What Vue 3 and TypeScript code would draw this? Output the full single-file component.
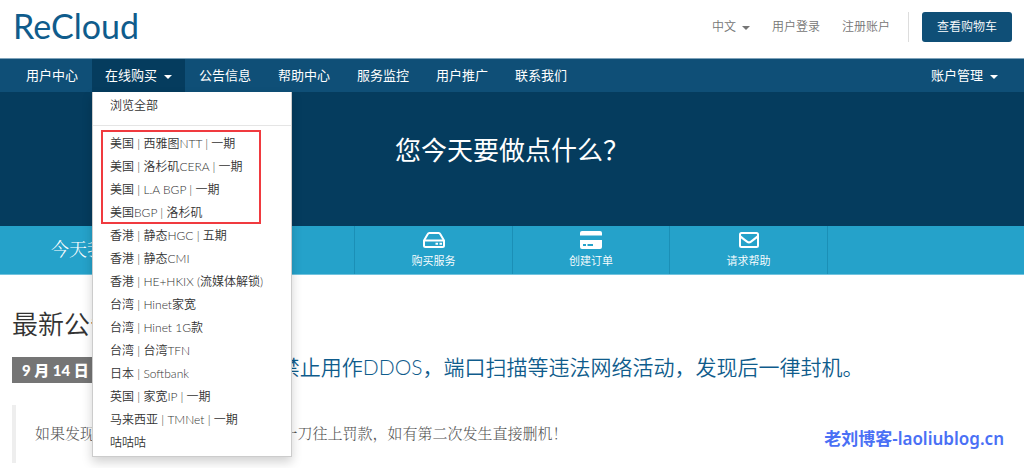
<script setup lang="ts">
interface NavItem {
  label: string
  caret?: boolean
  active?: boolean
}

const navItems: NavItem[] = [
  { label: '用户中心' },
  { label: '在线购买', caret: true, active: true },
  { label: '公告信息' },
  { label: '帮助中心' },
  { label: '服务监控' },
  { label: '用户推广' },
  { label: '联系我们' },
]

const featured: string[] = [
  '美国 | 西雅图NTT | 一期',
  '美国 | 洛杉矶CERA | 一期',
  '美国 | L.A BGP | 一期',
  '美国BGP | 洛杉矶',
]

const products: string[] = [
  '香港 | 静态HGC | 五期',
  '香港 | 静态CMI',
  '香港 | HE+HKIX (流媒体解锁)',
  '台湾 | Hinet家宽',
  '台湾 | Hinet 1G款',
  '台湾 | 台湾TFN',
  '日本 | Softbank',
  '英国 | 家宽IP | 一期',
  '马来西亚 | TMNet | 一期',
  '咕咕咕',
]
</script>

<template>
  <div class="page">
    <header class="header">
      <a class="logo" href="#">ReCloud</a>
      <ul class="top-links">
        <li><button type="button" class="lang">中文<span class="caret"></span></button></li>
        <li><a href="#">用户登录</a></li>
        <li><a href="#">注册账户</a></li>
        <li class="cart-cell"><a class="cart" href="#">查看购物车</a></li>
      </ul>
    </header>

    <nav class="nav">
      <ul class="nav-list">
        <li v-for="item in navItems" :key="item.label" class="nav-item" :class="{ active: item.active }">
          <a href="#">{{ item.label }}<span v-if="item.caret" class="caret"></span></a>
          <div v-if="item.active" class="menu">
            <a class="menu-link" href="#">浏览全部</a>
            <hr class="menu-rule" />
            <div class="featured">
              <a v-for="name in featured" :key="name" class="menu-link" href="#">{{ name }}</a>
            </div>
            <a v-for="name in products" :key="name" class="menu-link" href="#">{{ name }}</a>
          </div>
        </li>
      </ul>
      <div class="nav-item">
        <a href="#">账户管理<span class="caret"></span></a>
      </div>
    </nav>

    <section class="hero">
      <h2>您今天要做点什么？</h2>
    </section>

    <section class="shortcuts">
      <p class="prompt">今天我们能帮您什么</p>
      <a class="shortcut" href="#">
        <svg width="24" height="18" viewBox="0 0 24 18" fill="none" stroke="#fff" stroke-width="2" stroke-linejoin="round" aria-hidden="true">
          <path d="M2 9.500 L5.800 3 Q6.300 2 7.300 2 H16.700 Q17.700 2 18.200 3 L22 9.500 V14.500 Q22 16 20.500 16 H3.500 Q2 16 2 14.500 Z" />
          <path d="M2 9.500 H22" />
          <path d="M13.500 12.800 H16 M17.500 12.800 H20" stroke-linejoin="miter" />
        </svg>
        <span>购买服务</span>
      </a>
      <a class="shortcut" href="#">
        <svg width="24" height="18" viewBox="0 0 24 18" aria-hidden="true">
          <path fill="#fff" d="M3 0 H21 Q23 0 23 2 V4.500 H1 V2 Q1 0 3 0 Z" />
          <path fill="#fff" fill-rule="evenodd" d="M1 9 H23 V16 Q23 18 21 18 H3 Q1 18 1 16 Z M4 13 V15 H7 V13 Z M8.500 13 V15 H14 V13 Z" />
        </svg>
        <span>创建订单</span>
      </a>
      <a class="shortcut" href="#">
        <svg width="22" height="18" viewBox="0 0 22 18" fill="none" stroke="#fff" stroke-width="2" stroke-linejoin="round" aria-hidden="true">
          <rect x="2" y="2" width="18" height="14" rx="1.500" />
          <path d="M2 5 Q4 7 9 10.600 Q11 12.200 13 10.600 Q18 7 20 5" />
        </svg>
        <span>请求帮助</span>
      </a>
      <div class="shortcut-end"></div>
    </section>

    <main class="news">
      <h2>最新公告</h2>
      <article>
        <div class="headline">
          <time>9 月 14 日</time>
          <a href="#">本站的所有服务器禁止用作DDOS，端口扫描等违法网络活动，发现后一律封机。</a>
        </div>
        <blockquote>
          <p>如果发现 违规行为， 立即封停并处以一刀往上罚款，如有第二次发生直接删机！</p>
        </blockquote>
      </article>
    </main>

    <div class="watermark">老刘博客-laoliublog.cn</div>
  </div>
</template>

<style>
body {
  background: #fff;
  overflow: hidden;
}
</style>

<style scoped>
.page {
  position: relative;
  min-height: 100vh;
  font-family: Lato, "Noto Sans CJK SC", sans-serif;
  font-size: 12px;
  color: #444;
}

a {
  color: inherit;
  text-decoration: none;
}

ul,
h2,
p,
blockquote {
  margin: 0;
  padding: 0;
  font-weight: 400;
  list-style: none;
}

.caret {
  display: inline-block;
  margin-left: 6px;
  vertical-align: middle;
  border: 4px solid transparent;
  border-top-color: currentColor;
  border-bottom: 0;
}

.header {
  display: flex;
  justify-content: space-between;
  align-items: flex-start;
  padding: 0 12px 0 13px;
  height: 58px;
  border-bottom: 1px solid #7fa3ba;
}

.logo {
  color: #0f5c8c;
  font-size: 34px;
  font-weight: 400;
  line-height: 52px;
}

.top-links {
  display: flex;
  align-items: center;
  gap: 22px;
  padding-top: 12px;
  color: #757575;
  font-weight: 350;
}

.top-links li:not(.cart-cell) {
  padding-bottom: 4px;
}

.lang {
  padding: 0;
  border: 0;
  background: none;
  font: inherit;
  color: inherit;
}

.cart-cell {
  margin-left: -4px;
  padding-left: 13px;
  border-left: 1px solid #ddd;
}

.cart {
  display: block;
  padding: 0 15px;
  line-height: 30px;
  border-radius: 3px;
  background: #0f4f77;
  color: #fff;
}

.nav {
  display: flex;
  justify-content: space-between;
  padding: 0 13px;
  background: #0f4f77;
  color: #fff;
  font-size: 13px;
  line-height: 33px;
}

.nav-list {
  display: flex;
  gap: 1px;
}

.nav-item {
  position: relative;
}

.nav-item > a {
  display: block;
  padding: 0 13px;
}

.nav-item .caret {
  margin-left: 7px;
}

.active {
  background: #053c5e;
}

.menu {
  position: absolute;
  z-index: 2;
  top: 100%;
  left: 0;
  width: 198px;
  padding: 2px 0;
  border: 1px solid #ccc;
  border-top: 0;
  background: #fff;
  box-shadow: 0 5px 10px rgba(0, 0, 0, 0.18);
  color: #333;
  font-size: 12px;
  font-weight: 350;
  line-height: 23px;
}

.menu-link {
  display: block;
  padding: 0 17px;
  white-space: nowrap;
}

.menu-rule {
  margin: 8px 0 6px;
  border: 0;
  border-top: 1px solid #e5e5e5;
}

.featured {
  position: relative;
}

.featured::before {
  content: "";
  position: absolute;
  inset: -2px 30px 0 8px;
  border: 2px solid #f03a3f;
}

.hero {
  padding: 38px 12px 56px;
  background: #053c5e;
  color: #fff;
  text-align: center;
}

.hero h2 {
  font-size: 26px;
  line-height: 40px;
}

.shortcuts {
  display: grid;
  grid-template-columns: 343fr 158fr 157fr 158fr 184fr;
  padding: 0 13px 0 11px;
  background: #25a2ca;
  border-bottom: 1px solid #72c3de;
  color: #fff;
}

.prompt {
  padding-left: 40px;
  font-family: "Liberation Serif", "Noto Serif CJK SC", "Noto Sans CJK SC", serif;
  font-size: 18px;
  line-height: 48px;
}

.shortcut {
  display: flex;
  flex-direction: column;
  align-items: center;
  gap: 3px;
  padding: 5px 0 4px;
  border-left: 1px solid #1b8fb6;
  font-size: 11px;
  font-weight: 350;
  line-height: 18px;
}

.shortcut-end {
  border-left: 1px solid #1b8fb6;
}

.news {
  padding: 29px 12px 0;
}

.news h2 {
  color: #333;
  font-size: 26px;
  font-weight: 350;
  line-height: 40px;
}

.headline {
  display: flex;
  align-items: flex-end;
  gap: 12px;
  margin-top: 7px;
  color: #0f5c8c;
  font-size: 21px;
  font-weight: 350;
  line-height: 32px;
  white-space: nowrap;
}

time {
  padding: 0 10px;
  background: #757575;
  color: #fff;
  font-size: 15px;
  font-weight: 900;
  line-height: 26px;
}

blockquote {
  margin-top: 22px;
  padding: 17px 19px;
  border-left: 4px solid #eee;
  color: #555;
  font-family: "Liberation Serif", "Noto Serif CJK SC", "Noto Sans CJK SC", serif;
  font-size: 15px;
  line-height: 24px;
}

blockquote p,
.prompt {
  font-weight: 300;
}

.watermark {
  position: absolute;
  right: 20px;
  bottom: 17px;
  color: #4a70f5;
  font-family: "Noto Sans", "Noto Sans CJK SC", sans-serif;
  font-size: 17px;
  font-weight: 600;
  line-height: 24px;
}
</style>
